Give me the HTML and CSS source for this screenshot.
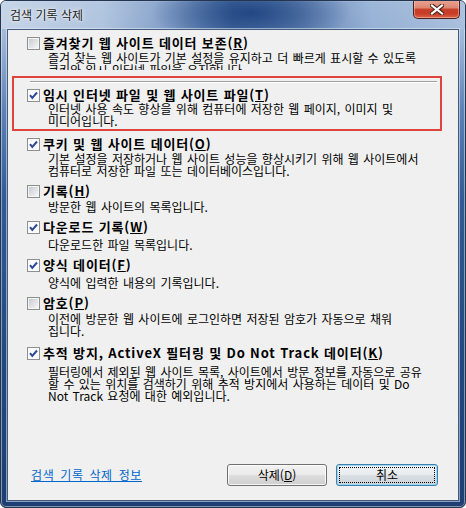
FILE: index.html
```html
<!DOCTYPE html>
<html lang="ko">
<head>
<meta charset="utf-8">
<title>검색 기록 삭제</title>
<link rel="stylesheet" href="styles.css">
</head>
<body>
<div class="window">
  <div class="titlebar">
    <span class="title">검색 기록 삭제</span>
    <div class="close" aria-label="닫기">
      <svg width="14" height="11" viewBox="0 0 14 11">
        <path d="M2 1.5 L12 9.5 M12 1.5 L2 9.5" stroke="#4a1f18" stroke-width="4.2" stroke-linecap="square" fill="none"/>
        <path d="M2 1.5 L12 9.5 M12 1.5 L2 9.5" stroke="#ffffff" stroke-width="2.2" stroke-linecap="square" fill="none"/>
      </svg>
    </div>
  </div>
  <div class="client">
    <div class="list">
      <div class="item i1">
        <div class="label"><span class="cb"></span><span>즐겨찾기 웹 사이트 데이터 보존(<u>R</u>)</span></div>
        <div class="desc clip">즐겨 찾는 웹 사이트가 기본 설정을 유지하고 더 빠르게 표시할 수 있도록<br>쿠키와 임시 인터넷 파일을 유지합니다.</div>
      </div>
      <div class="sep"></div>
      <div class="item i2">
        <div class="label"><span class="cb on"><svg width="11" height="11" viewBox="0 0 11 11"><path d="M2 5.2 L4.3 8 L9 2.5" stroke="#2e4c9a" stroke-width="2" fill="none"/></svg></span><span>임시 인터넷 파일 및 웹 사이트 파일(<u>T</u>)</span></div>
        <div class="desc">인터넷 사용 속도 향상을 위해 컴퓨터에 저장한 웹 페이지, 이미지 및<br>미디어입니다.</div>
      </div>
      <div class="item i3">
        <div class="label"><span class="cb on"><svg width="11" height="11" viewBox="0 0 11 11"><path d="M2 5.2 L4.3 8 L9 2.5" stroke="#2e4c9a" stroke-width="2" fill="none"/></svg></span><span>쿠키 및 웹 사이트 데이터(<u>O</u>)</span></div>
        <div class="desc">기본 설정을 저장하거나 웹 사이트 성능을 향상시키기 위해 웹 사이트에서<br>컴퓨터로 저장한 파일 또는 데이터베이스입니다.</div>
      </div>
      <div class="item i4">
        <div class="label"><span class="cb"></span><span>기록(<u>H</u>)</span></div>
        <div class="desc">방문한 웹 사이트의 목록입니다.</div>
      </div>
      <div class="item i5">
        <div class="label"><span class="cb on"><svg width="11" height="11" viewBox="0 0 11 11"><path d="M2 5.2 L4.3 8 L9 2.5" stroke="#2e4c9a" stroke-width="2" fill="none"/></svg></span><span>다운로드 기록(<u>W</u>)</span></div>
        <div class="desc">다운로드한 파일 목록입니다.</div>
      </div>
      <div class="item i6">
        <div class="label"><span class="cb on"><svg width="11" height="11" viewBox="0 0 11 11"><path d="M2 5.2 L4.3 8 L9 2.5" stroke="#2e4c9a" stroke-width="2" fill="none"/></svg></span><span>양식 데이터(<u>F</u>)</span></div>
        <div class="desc">양식에 입력한 내용의 기록입니다.</div>
      </div>
      <div class="item i7">
        <div class="label"><span class="cb"></span><span>암호(<u>P</u>)</span></div>
        <div class="desc">이전에 방문한 웹 사이트에 로그인하면 저장된 암호가 자동으로 채워<br>집니다.</div>
      </div>
      <div class="item i8">
        <div class="label"><span class="cb on"><svg width="11" height="11" viewBox="0 0 11 11"><path d="M2 5.2 L4.3 8 L9 2.5" stroke="#2e4c9a" stroke-width="2" fill="none"/></svg></span><span>추적 방지, ActiveX 필터링 및 Do Not Track 데이터(<u>K</u>)</span></div>
        <div class="desc">필터링에서 제외된 웹 사이트 목록, 사이트에서 방문 정보를 자동으로 공유<br>할 수 있는 위치를 검색하기 위해 추적 방지에서 사용하는 데이터 및 Do<br>Not Track 요청에 대한 예외입니다.</div>
      </div>
    </div>
    <div class="highlight"></div>
    <div class="footer">
      <a class="link" href="#">검색 기록 삭제 정보</a>
      <div class="buttons">
        <div class="btn">삭제(<u>D</u>)</div>
        <div class="btn focus">취소</div>
      </div>
    </div>
  </div>
</div>
</body>
</html>
```

FILE: styles.css
```css
* { box-sizing: border-box; }
html, body { margin: 0; padding: 0; }
body {
  width: 466px;
  height: 508px;
  background: #ffffff;
  font-family: "Noto Sans CJK KR", "Noto Sans", sans-serif;
  font-size: 12px;
  color: #000;
  overflow: hidden;
}
.window {
  width: 466px;
  height: 508px;
  display: flex;
  flex-direction: column;
  border: 1px solid #24354f;
  border-radius: 6px;
  overflow: hidden;
  background: linear-gradient(180deg, #b7c9e1 0px, #9db5d6 40px, #5c82b6 110px, #2f5a95 200px, #22497f 360px, #1d3f72 508px);
  box-shadow: inset 0 0 0 1px rgba(255,255,255,0.45);
}
.titlebar {
  height: 28px;
  flex: none;
  display: flex;
  justify-content: space-between;
  align-items: flex-start;
  padding-left: 9px;
  background:
    radial-gradient(ellipse 100px 34px at 250px 12px, rgba(25,62,125,0.85), rgba(25,62,125,0) 100%),
    linear-gradient(90deg, rgba(200,214,232,0.9) 0%, rgba(178,198,224,0.75) 22%, rgba(95,130,182,0.6) 38%, rgba(40,82,142,0.7) 50%, rgba(55,95,155,0.6) 64%, rgba(140,170,210,0.6) 80%, rgba(170,192,222,0.7) 100%);
}
.title {
  line-height: 28px;
  font-size: 12px;
  color: #1a1a1a;
  text-shadow: 0 0 5px rgba(255,255,255,0.9), 0 0 2px rgba(255,255,255,0.9);
}
.close {
  width: 47px;
  height: 19px;
  margin-top: -1px;
  margin-right: 5px;
  border: 1px solid #4d2119;
  border-top: none;
  border-radius: 0 0 5px 5px;
  background: linear-gradient(180deg, #e9a593 0%, #dc8670 45%, #c8402a 50%, #c73d27 75%, #db6348 100%);
  box-shadow: inset 0 0 0 1px rgba(255,220,210,0.45);
  display: flex;
  align-items: center;
  justify-content: center;
}
.client {
  flex: 1;
  margin: 0 6px 6px 6px;
  background: #f0f0f0;
  border: 1px solid #435a7d;
  box-shadow: 0 0 0 1px rgba(230,238,250,0.55);
  display: flex;
  flex-direction: column;
  position: relative;
}
.list {
  padding: 6px 0 0 19px;
  display: flex;
  flex-direction: column;
}
.label {
  display: flex;
  align-items: center;
  gap: 3px;
  height: 14px;
  line-height: 14px;
  font-size: 13px;
  font-weight: bold;
  letter-spacing: 0.85px;
  white-space: nowrap;
}
.cb {
  width: 13px;
  height: 13px;
  flex: none;
  border: 1px solid #8e8f8f;
  padding: 1px;
  background: #f4f4f4;
  display: flex;
}
.cb::before {
  content: "";
  flex: 1;
  background: linear-gradient(135deg, #c8cbd1 0%, #dfe1e4 50%, #f6f6f6 100%);
}
.cb.on { background: #fbfbfb; padding: 0; }
.cb.on::before { display: none; }
.desc {
  margin: 3px 0 0 21px;
  line-height: 12px;
  white-space: nowrap;
  word-spacing: 1px;
}
.clip { height: 18px; overflow: hidden; }
.item { margin-top: 7px; }
.i1 { margin-top: 0; }
.i1 .desc { margin-top: 2px; }
.i2 { margin-top: 5px; }
.i2 .desc { margin-top: 1px; }
.i3 { margin-top: 10px; }
.i3 .desc { margin-top: 2px; }
.i5 .desc, .i6 .desc { margin-top: 5px; }
.i8 { margin-top: 9px; }
.i8 .desc { margin-top: 6px; }
.sep {
  margin: 11px 0 0 3px;
  width: 407px;
  height: 2px;
  border-top: 1px solid #a0a0a0;
  border-bottom: 1px solid #ffffff;
}
.highlight {
  position: absolute;
  left: 4px;
  top: 46px;
  width: 430px;
  height: 55px;
  border: 2px solid #e0443a;
}
.footer {
  margin-top: auto;
  display: flex;
  align-items: center;
  justify-content: space-between;
  padding: 0 20px 14px 23px;
}
.link {
  color: #0066cc;
  text-decoration: underline;
  line-height: 14px;
  word-spacing: 2px;
  letter-spacing: 0.6px;
}
.buttons { display: flex; gap: 9px; }
.btn {
  width: 100px;
  height: 22px;
  border: 1px solid #707070;
  border-radius: 3px;
  background: linear-gradient(180deg, #f2f2f2 0%, #ebebeb 48%, #dddddd 52%, #cfcfcf 100%);
  box-shadow: inset 0 0 0 1px rgba(255,255,255,0.8);
  display: flex;
  align-items: center;
  justify-content: center;
  line-height: 14px;
  position: relative;
}
.btn.focus {
  width: 102px;
  border-color: #3c7fb1;
  box-shadow: inset 0 0 0 1px #9fd6f3;
  background: linear-gradient(180deg, #f0f3f5 0%, #e8ecef 48%, #dadfe3 52%, #ccd3d8 100%);
}
.btn.focus::after {
  content: "";
  position: absolute;
  inset: 2px;
  border: 1px dotted #000;
}
```
